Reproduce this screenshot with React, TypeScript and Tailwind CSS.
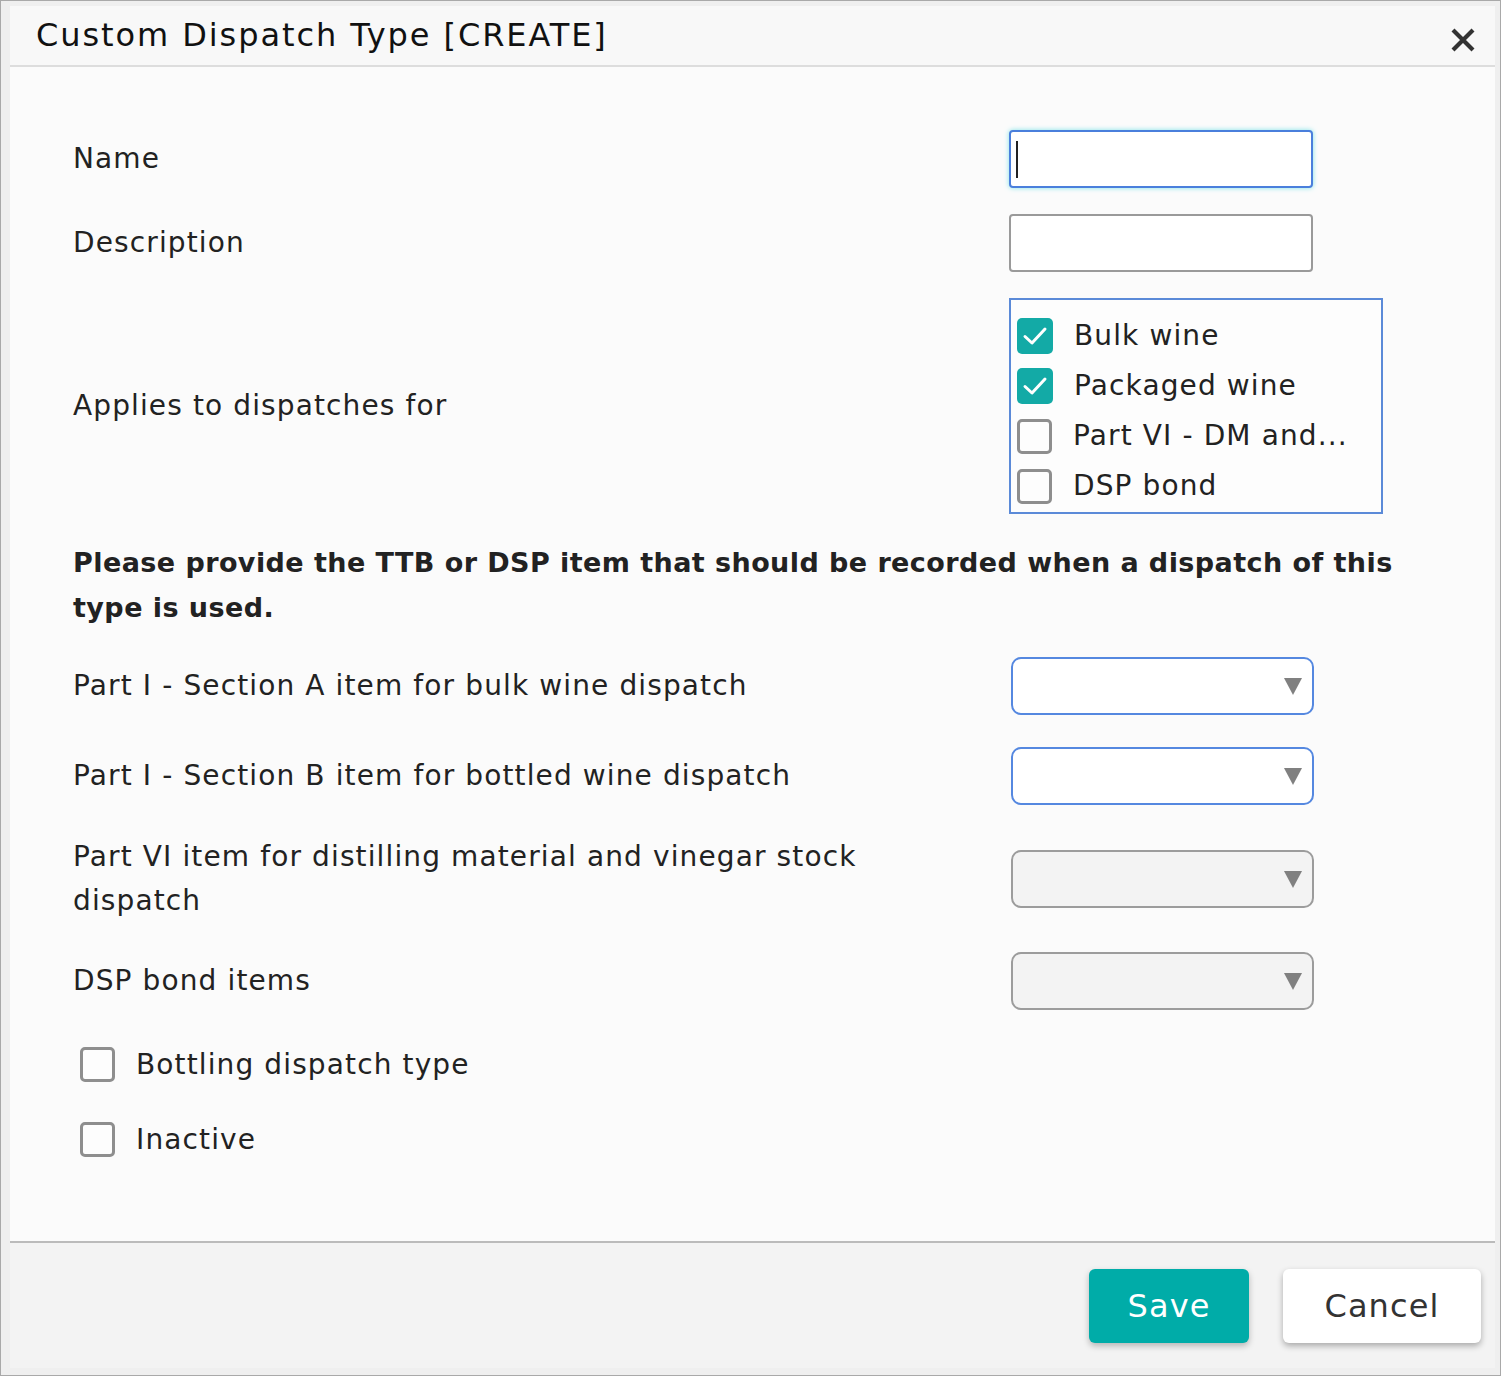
import React from 'react';

const groupOptions = [
  { label: 'Bulk wine', checked: true },
  { label: 'Packaged wine', checked: true },
  { label: 'Part VI - DM and...', checked: false },
  { label: 'DSP bond', checked: false },
];

function CheckIcon() {
  return (
    <svg viewBox="0 0 36 36" className="h-full w-full">
      <path d="M8 18.5 L15 25 L28 11" fill="none" stroke="#ffffff" strokeWidth="3" strokeLinecap="round" strokeLinejoin="round" />
    </svg>
  );
}

function Checkbox({ checked }: { checked: boolean }) {
  if (checked) {
    return (
      <div className="h-[36px] w-[36px] shrink-0 rounded-[5px] bg-[#13aaa6]">
        <CheckIcon />
      </div>
    );
  }
  return <div className="h-[35px] w-[35px] shrink-0 rounded-[5px] border-[3px] border-[#8e8e8e] bg-[#fdfdfd]" />;
}

function SelectBox({ disabled }: { disabled?: boolean }) {
  return (
    <div
      className={
        disabled
          ? 'flex h-[58px] w-[303px] items-center justify-end rounded-[10px] border-2 border-[#9c9c9c] bg-[#f3f3f3] pr-[10px]'
          : 'flex h-[58px] w-[303px] items-center justify-end rounded-[10px] border-2 border-[#5588e0] bg-white pr-[10px]'
      }
    >
      <svg viewBox="0 0 18 17" className="h-[17px] w-[18px]">
        <path d="M0 0 H18 L9 17 Z" fill="#808080" />
      </svg>
    </div>
  );
}

function Row({ label, children, className }: { label: React.ReactNode; children: React.ReactNode; className?: string }) {
  return (
    <div className={'flex items-center ' + (className ?? '')}>
      <div className="w-[936px] shrink-0 pr-[120px] leading-[44px]">{label}</div>
      {children}
    </div>
  );
}

export default function App() {
  return (
    <div className="flex h-[1376px] w-full flex-col border border-[#a9a9a9] bg-[#efefef] pb-[7px] pl-[9px] pr-[5px] pt-[5px] font-['DejaVu_Sans',sans-serif] text-[28px] tracking-[0.04em] text-[#222]">
      <div className="flex flex-1 flex-col bg-[#fbfbfb]">
        {/* header */}
        <div className="flex h-[61px] items-center justify-between border-b-2 border-[#dddddd] bg-[#f8f8f8] pl-[26px] pr-[20px]">
          <div className="pb-[2px] text-[32px] tracking-[0.06em] text-[#111]">Custom Dispatch Type [CREATE]</div>
          <svg viewBox="0 0 24 24" className="mt-[8px] h-[24px] w-[24px]">
            <path d="M2 2 L22 22 M22 2 L2 22" stroke="#333" strokeWidth="4.2" />
          </svg>
        </div>

        {/* body */}
        <div className="flex flex-1 flex-col pl-[63px] pt-[63px]">
          <Row label="Name">
            <div className="flex h-[58px] w-[304px] items-center rounded-[4px] border-2 border-[#4a7fdc] bg-white pl-[5px] shadow-[0_0_5px_#7fe3e8]">
              <div className="h-[37px] w-[2px] bg-[#222]" />
            </div>
          </Row>

          <Row label="Description" className="mt-[26px]">
            <div className="h-[58px] w-[304px] rounded-[4px] border-2 border-[#9a9a9a] bg-white" />
          </Row>

          <Row label="Applies to dispatches for" className="mt-[26px]">
            <div className="h-[216px] w-[374px] border-2 border-[#5b8ad8] bg-[#fdfdfd] pl-[6px] pt-[11px]">
              {groupOptions.map((o) => (
                <div key={o.label} className="flex h-[50px] items-center gap-[21px]">
                  <Checkbox checked={o.checked} />
                  <span className="whitespace-nowrap">{o.label}</span>
                </div>
              ))}
            </div>
          </Row>

          <p className="mt-[26px] w-[1360px] text-[27px] font-bold leading-[45px] tracking-[0.016em] text-[#222]">
            Please provide the TTB or DSP item that should be recorded when a dispatch of this type is used.
          </p>

          <Row label="Part I - Section A item for bulk wine dispatch" className="mt-[27px]">
            <div className="pl-[2px]">
              <SelectBox />
            </div>
          </Row>

          <Row label="Part I - Section B item for bottled wine dispatch" className="mt-[32px]">
            <div className="pl-[2px]">
              <SelectBox />
            </div>
          </Row>

          <Row label="Part VI item for distilling material and vinegar stock dispatch" className="mt-[30px]">
            <div className="pl-[2px]">
              <SelectBox disabled />
            </div>
          </Row>

          <Row label="DSP bond items" className="mt-[29px]">
            <div className="pl-[2px]">
              <SelectBox disabled />
            </div>
          </Row>

          <div className="mt-[37px] flex h-[35px] items-center gap-[21px] pl-[7px]">
            <Checkbox checked={false} />
            <span>Bottling dispatch type</span>
          </div>

          <div className="mt-[40px] flex h-[35px] items-center gap-[21px] pl-[7px]">
            <Checkbox checked={false} />
            <span>Inactive</span>
          </div>
        </div>

        {/* footer */}
        <div className="flex h-[127px] items-center justify-end gap-[34px] border-t-2 border-[#bbbbbb] bg-[#f3f3f3] pr-[14px]">
          <button className="h-[74px] w-[160px] rounded-[6px] bg-[#00aca8] text-[32px] text-white shadow-[0_3px_6px_rgba(0,0,0,0.25)]">
            Save
          </button>
          <button className="h-[74px] w-[198px] rounded-[6px] bg-white text-[32px] text-[#333] shadow-[0_3px_6px_rgba(0,0,0,0.3)]">
            Cancel
          </button>
        </div>
      </div>
    </div>
  );
}
